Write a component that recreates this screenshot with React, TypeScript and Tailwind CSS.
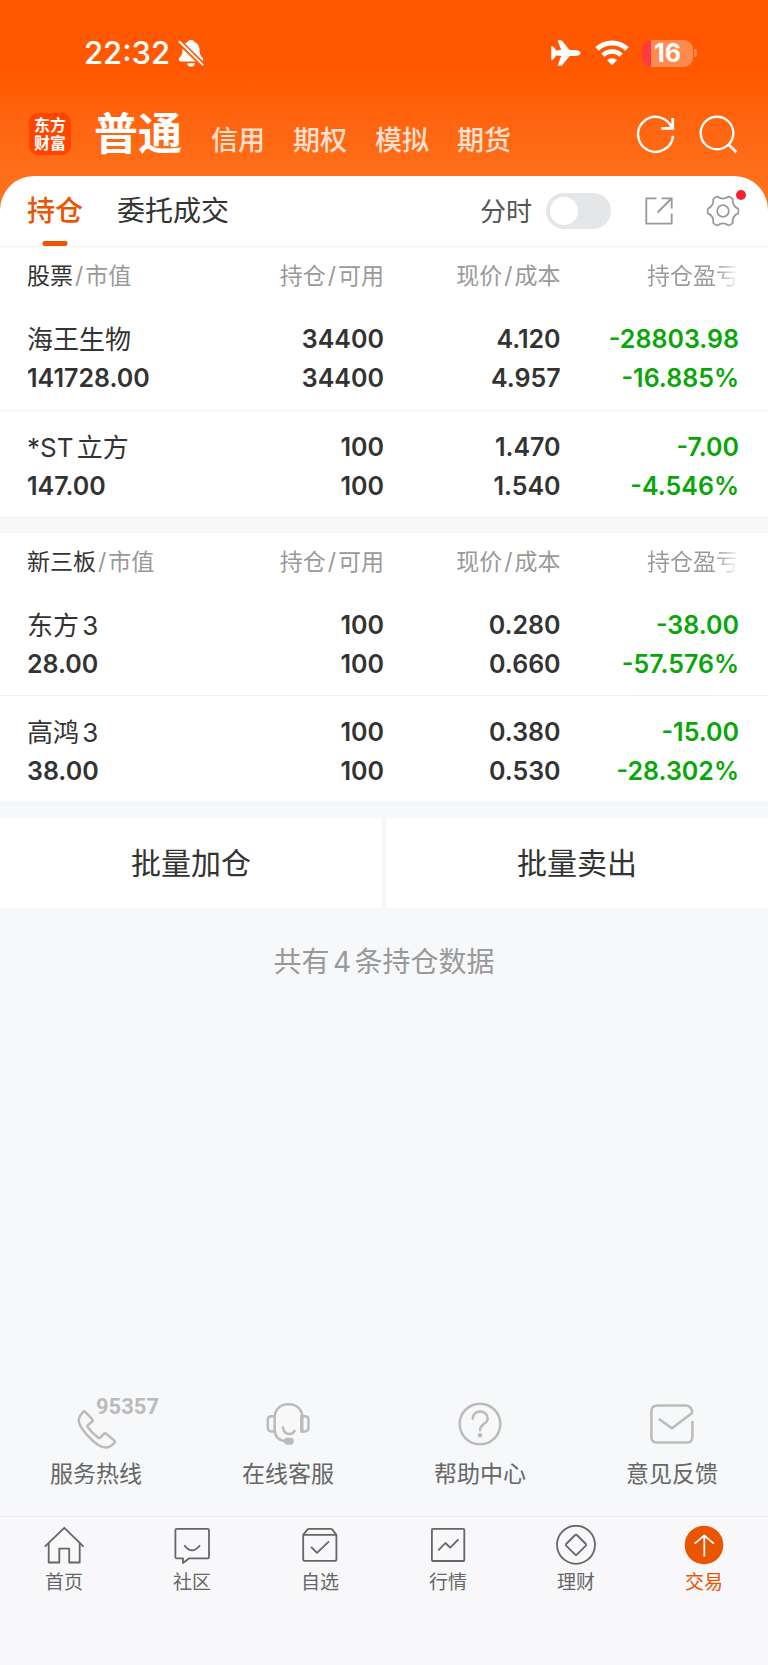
import React, { useState } from 'react';

interface Holding {
  name: string;
  value: string;
  held: string;
  available: string;
  price: string;
  cost: string;
  profit: string;
  rate: string;
}

const stocks: Holding[] = [
  { name: '海王生物', value: '141728.00', held: '34400', available: '34400', price: '4.120', cost: '4.957', profit: '-28803.98', rate: '-16.885%' },
  { name: '*ST立方', value: '147.00', held: '100', available: '100', price: '1.470', cost: '1.540', profit: '-7.00', rate: '-4.546%' },
];

const neeq: Holding[] = [
  { name: '东方3', value: '28.00', held: '100', available: '100', price: '0.280', cost: '0.660', profit: '-38.00', rate: '-57.576%' },
  { name: '高鸿3', value: '38.00', held: '100', available: '100', price: '0.380', cost: '0.530', profit: '-15.00', rate: '-28.302%' },
];

const accounts = ['信用', '期权', '模拟', '期货'];

const StatusBar: React.FC = () => (
  <div className="flex h-[106px] items-center justify-between pl-[84px] pr-[71px] text-white">
    <div className="flex items-center gap-2">
      <span className="text-[31px] font-medium leading-10">22:32</span>
      <svg className="h-7 w-[26px]" viewBox="0 0 26 28" fill="none">
        <path d="M13 1C10.8 1 9.6 2.2 9.3 3.3 5.8 4.6 4.6 7.6 4.4 11.2 4.2 15.4 3.4 16.6 1.6 18.6 0 20.6.8 22.4 2.8 22.4H23.2C25.2 22.4 26 20.6 24.4 18.6 22.6 16.6 21.8 15.4 21.6 11.2 21.4 7.6 20.2 4.6 16.7 3.3 16.4 2.2 15.2 1 13 1ZM9 24.2H17C16.6 26.4 15 27.6 13 27.6S9.4 26.4 9 24.2Z" fill="#fff" />
        <path d="M0 1.5L26 27" stroke="#ff5800" strokeWidth="5.4" />
        <path d="M1.6 2.8L24.6 25.6" stroke="#fff" strokeWidth="2" strokeLinecap="round" />
      </svg>
    </div>
    <div className="flex items-center">
      <svg className="mr-[14px] h-7 w-[30px]" viewBox="0 0 30 28" fill="currentColor">
        <path d="M29.6 14C29.6 15.8 26.8 17 23.6 17H18.6L11.6 25.7C11 26.5 10.4 26.8 9.4 26.8H7.4C6.9 26.8 6.7 26.4 6.9 25.9L10.2 17 5.2 16.6 2.6 20C2.2 20.5 1.8 20.7 1.2 20.7H.9C.5 20.7.3 20.4.3 20V8C.3 7.6.5 7.3.9 7.3H1.2C1.8 7.3 2.2 7.5 2.6 8L5.2 11.4 10.2 11 6.9 2.1C6.7 1.6 6.9 1.2 7.4 1.2H9.4C10.4 1.2 11 1.5 11.6 2.3L18.6 11H23.6C26.8 11 29.6 12.2 29.6 14Z" />
      </svg>
      <svg className="mr-[13px] h-[26px] w-[34px]" viewBox="0 0 34 26" fill="none" stroke="currentColor" strokeWidth="5">
        <path d="M2 8.9A22 22 0 0 1 32 8.9" />
        <path d="M7.8 15.1A13.5 13.5 0 0 1 26.2 15.1" strokeWidth="4.6" />
        <path d="M12 20.1A7.4 7.4 0 0 1 22 20.1L17.8 24.6Q17 25.3 16.2 24.6Z" fill="currentColor" stroke="none" />
      </svg>
      <div className="flex h-[27px] w-[51px] items-center justify-center rounded-[9px] bg-gradient-to-r from-[#ff3b42] from-[17%] to-[#ff8a4f] to-[17%] text-[25px] font-bold leading-[27px]">
        16
      </div>
      <span className="ml-px h-2 w-[3px] rounded-r-full bg-[#ff8a4f]" />
    </div>
  </div>
);

const TitleBar: React.FC = () => (
  <div className="flex h-[70px] items-start pl-[29px] pr-[30px] text-white">
    <div className="mt-[7px] grid h-[42px] w-[42px] shrink-0 place-content-center rounded-[9px] bg-[#ff4400] text-center text-[16px] font-bold leading-[18px]">
      <span>东方</span>
      <span>财富</span>
    </div>
    <nav className="ml-[23px] flex flex-1 items-baseline gap-7">
      <button type="button" className="mr-px text-[44px] font-bold leading-[56px]">普通</button>
      {accounts.map((account) => (
        <button key={account} type="button" className="text-[27px] font-medium leading-9 text-white/80">{account}</button>
      ))}
    </nav>
    <div className="mt-[9px] flex gap-[22px]">
      <button type="button" aria-label="刷新">
        <svg className="h-10 w-10" viewBox="0 0 40 40" fill="none" stroke="currentColor" strokeWidth="2.4">
          <path d="M37 20.8A17.5 17.5 0 1 1 36 13.3" />
          <path d="M36.7 3V13.4H25.3" strokeWidth="2.8" />
        </svg>
      </button>
      <button type="button" aria-label="搜索">
        <svg className="h-10 w-10" viewBox="0 0 40 40" fill="none" stroke="currentColor" strokeWidth="2.4">
          <circle cx="19" cy="18" r="16.3" />
          <path d="M30 29L38.4 37.2" strokeWidth="2.8" />
        </svg>
      </button>
    </div>
  </div>
);

const TabBar: React.FC = () => {
  const [minute, setMinute] = useState(false);

  return (
    <div className="flex h-[71px] items-center rounded-t-[34px] border-b border-[#f0f1f3] bg-white pl-[27px] pr-7">
      <button type="button" className="relative h-full text-[28px] font-medium text-[#ea5504]">
        持仓
        <span className="absolute bottom-0 left-1/2 h-[5px] w-[25px] -translate-x-1/2 rounded-[2px] bg-[#ea5504]" />
      </button>
      <button type="button" className="ml-[34px] h-full text-[28px] text-[#333]">委托成交</button>
      <label className="ml-auto flex items-center gap-[14px] text-[26px] text-[#555]">
        分时
        <input
          type="checkbox"
          role="switch"
          checked={minute}
          onChange={(e) => setMinute(e.target.checked)}
          className="h-9 w-[65px] appearance-none rounded-full bg-[#e4e6e8] p-1 before:block before:h-7 before:w-7 before:rounded-full before:bg-white checked:bg-[#ea5504] checked:before:ml-auto"
        />
      </label>
      <button type="button" aria-label="分享" className="ml-[33px] text-[#999]">
        <svg className="h-[30px] w-[30px]" viewBox="0 0 30 30" fill="none" stroke="currentColor" strokeWidth="1.8">
          <path d="M12.5 2.3H2.3V27.7H27.7V17.5" strokeLinejoin="round" />
          <path d="M17.5 2.3H27.7V12.5M13.5 16.5L27.5 2.5" />
        </svg>
      </button>
      <button type="button" aria-label="设置" className="relative ml-8 text-[#999]">
        <svg className="h-[34px] w-[34px]" viewBox="-17.6 -17.6 35.2 35.2" fill="none" stroke="currentColor" strokeWidth="1.8">
          <path d="M15.6-2.5Q16.4 0 15.6 2.5Q9.27 5.35 10.07 12.43Q8.3 14.4 5.73 14.94Q0 10.7-5.73 14.94Q-8.3 14.4-10.07 12.43Q-9.27 5.35-15.6 2.5Q-16.4 0-15.6-2.5Q-9.27-5.35-10.07-12.43Q-8.3-14.4-5.73-14.94Q0-10.7 5.73-14.94Q8.3-14.4 10.07-12.43Q9.27-5.35 15.6-2.5Z" />
          <circle r="6" />
        </svg>
        <span className="absolute -right-[6px] -top-1 h-[10px] w-[10px] rounded-full bg-[#f5222d]" />
      </button>
    </div>
  );
};

const HoldingsTable: React.FC<{ title: string; rows: Holding[] }> = ({ title, rows }) => (
  <table className="w-full table-fixed border-collapse bg-white">
    <colgroup>
      <col className="w-[26%]" />
      <col className="w-[24%]" />
      <col className="w-[23%]" />
      <col className="w-[27%]" />
    </colgroup>
    <thead>
      <tr className="h-14 whitespace-nowrap text-right text-[23px] leading-8 text-[#999]">
        <th scope="col" className="pl-[27px] pt-[2px] text-left font-normal">
          <span className="text-[#333]">{title}</span>
          <span className="mx-[2px]">/</span>市值
        </th>
        <th scope="col" className="pt-[2px] font-normal">持仓<span className="mx-[2px]">/</span>可用</th>
        <th scope="col" className="pt-[2px] font-normal">现价<span className="mx-[2px]">/</span>成本</th>
        <th scope="col" className="pr-[29px] pt-[2px] font-normal">
          <span className="bg-gradient-to-r from-[#999] from-75% to-white bg-clip-text text-transparent">持仓盈亏</span>
        </th>
      </tr>
    </thead>
    <tbody>
      {rows.map((row) => (
        <tr key={row.name} className="h-[107px] border-b border-[#f0f1f3] text-right align-top text-[25px] font-semibold leading-[39px] text-[#333]">
          <td className="pl-[27px] pt-[17px] text-left">
            <div className="text-[26px] font-normal [text-autospace:normal]">{row.name}</div>
            <div>{row.value}</div>
          </td>
          <td className="pt-[17px]">
            <div>{row.held}</div>
            <div>{row.available}</div>
          </td>
          <td className="pt-[17px]">
            <div>{row.price}</div>
            <div>{row.cost}</div>
          </td>
          <td className="pr-[29px] pt-[17px] text-[#09a609]">
            <div>{row.profit}</div>
            <div>{row.rate}</div>
          </td>
        </tr>
      ))}
    </tbody>
  </table>
);

const services = [
  {
    label: '服务热线',
    badge: '95357',
    icon: <path d="M11 9.7Q10 8.9 9.1 10C6.5 13 4.7 15.3 4.7 18.2C4.7 25 21.5 45.6 32 45.6C35.2 45.6 38 43.4 40.4 40.9Q41.6 39.6 40.2 38.4L32.4 32Q30.9 30.8 29.6 32.1L26.6 35.3Q25.4 36.5 24 35.4C19.5 32 16.8 29.3 13.8 25.2Q12.9 23.9 14 22.9L18.2 19.6Q19.3 18.6 18.4 17.4Z" />,
  },
  {
    label: '在线客服',
    icon: (
      <>
        <path d="M8.7 29.5V15.5C8.7 7.5 14 2.2 22.5 2.2S36.3 7.5 36.3 15.5V29.5" />
        <path d="M8.7 14.2H5.5Q1.8 14.2 1.8 18V25.5Q1.8 29.4 5.5 29.4H8.7M36.3 14.2H38.8Q42.5 14.2 42.5 18V25.5Q42.5 29.4 38.8 29.4H35.3V14.2M8.7 28C9 34.5 13 38.6 20 39.3M16.8 25.3C17.5 30 20.3 32 23.2 32Q26.8 32 28.6 28.8" />
        <rect x="19.3" y="37" width="7.2" height="4.6" rx="2" fill="currentColor" />
      </>
    ),
  },
  {
    label: '帮助中心',
    icon: (
      <>
        <circle cx="22" cy="22" r="20.3" />
        <path d="M14.7 16.8C14.7 12.4 18 9.4 22.2 9.4S29.7 12.4 29.7 16.5C29.7 21.8 22 22 22 28.3" />
        <circle cx="22" cy="33.2" r="2.3" fill="currentColor" stroke="none" />
      </>
    ),
  },
  {
    label: '意见反馈',
    icon: <path d="M42.4 20V34.4Q42.4 40.6 36.2 40.6H7.6Q1.4 40.6 1.4 34.4V9.6Q1.4 3.4 7.6 3.4H35.6Q40.8 3.4 42.2 9.2Q42.5 11 40.8 12.1L22 26.3 9.6 17.4" />,
  },
];

const navItems = [
  { label: '首页', icon: <path d="M.8 21.7L20.3 2.8 39.6 21.7M4.7 18V37.5H15.3V23.6H25.2V37.5H35.7V18" /> },
  {
    label: '社区',
    icon: <path d="M4.8 3.8H35.6Q37 3.8 37 5.2V31.9Q37 33.3 35.6 33.3H17.3L11 38V33.3H4.8Q3.4 33.3 3.4 31.9V5.2Q3.4 3.8 4.8 3.8ZM12.3 20.3Q20 30.6 28 20.3" />,
  },
  {
    label: '自选',
    icon: <path d="M3.2 9.9L7.6 4.4Q8.2 3.8 9 3.8H30.8Q31.6 3.8 32.2 4.4L36.4 9.9V34.3Q36.4 35.9 34.8 35.9H4.8Q3.2 35.9 3.2 34.3V9.9H36.4M11 21.8L17 27.8 29 16.3" />,
  },
  {
    label: '行情',
    icon: (
      <>
        <rect x="3.9" y="3.8" width="32.4" height="32.2" rx="1" />
        <path d="M10.3 25.4L17.4 18 22.2 22.6 30.4 14.3" />
      </>
    ),
  },
  {
    label: '理财',
    icon: (
      <>
        <circle cx="20" cy="19.8" r="19" />
        <path d="M19.2 10Q20 9.2 20.8 10L29.9 19Q30.6 19.8 29.9 20.6L20.8 29.6Q20 30.4 19.2 29.6L10.1 20.6Q9.4 19.8 10.1 19Z" />
      </>
    ),
  },
  {
    label: '交易',
    active: true,
    icon: (
      <>
        <circle cx="20" cy="20" r="19.3" fill="currentColor" stroke="none" />
        <path d="M20.3 31.5V10.5M10.7 18.6L20.3 10.5 29.8 18.6" stroke="#fff" />
      </>
    ),
  },
];

const App: React.FC = () => {
  return (
    <div className="flex min-h-screen flex-col bg-[#f7f8fa] font-['Inter','Noto_Sans_CJK_SC',sans-serif] text-[#333]">
      <header className="bg-gradient-to-b from-[#ff5800] from-28% to-[#ff711b] to-75%">
        <StatusBar />
        <TitleBar />
        <TabBar />
      </header>

      <main className="flex flex-1 flex-col">
        <div className="flex flex-col gap-[15px]">
          <HoldingsTable title="股票" rows={stocks} />
          <HoldingsTable title="新三板" rows={neeq} />
          <div className="grid grid-cols-2 gap-1">
            <button type="button" className="h-[90px] bg-white text-[30px]">批量加仓</button>
            <button type="button" className="h-[90px] bg-white text-[30px]">批量卖出</button>
          </div>
        </div>
        <p className="mt-8 text-center text-[28px] leading-[44px] text-[#999] [text-autospace:normal]">共有4条持仓数据</p>

        <div className="mt-auto grid grid-cols-4 pb-7">
          {services.map((service) => (
            <a key={service.label} href="#" className="flex flex-col items-center gap-[14px]">
              <span className="relative text-[#bbb]">
                <svg className="h-11 w-11" viewBox="0 0 44 44" overflow="visible" fill="none" stroke="currentColor" strokeWidth="2.5" strokeLinecap="round" strokeLinejoin="round">
                  {service.icon}
                </svg>
                {service.badge && (
                  <span className="absolute -top-[7px] left-[22px] font-[Roboto] text-[22px] font-bold leading-6">{service.badge}</span>
                )}
              </span>
              <span className="text-[23px] leading-7 text-[#666]">{service.label}</span>
            </a>
          ))}
        </div>
      </main>

      <nav className="grid h-[149px] grid-cols-6 border-t border-[#e9eaec] bg-[#f8f8fb] pt-2">
        {navItems.map((item) => (
          <a key={item.label} href="#" className={`flex flex-col items-center gap-[6px] ${item.active ? 'text-[#ea5504]' : 'text-[#666]'}`}>
            <svg className="h-10 w-10" viewBox="0 0 40 40" fill="none" stroke="currentColor" strokeWidth="1.8" strokeLinejoin="round">
              {item.icon}
            </svg>
            <span className="text-[19px] leading-6">{item.label}</span>
          </a>
        ))}
      </nav>
    </div>
  );
};

export default App;
